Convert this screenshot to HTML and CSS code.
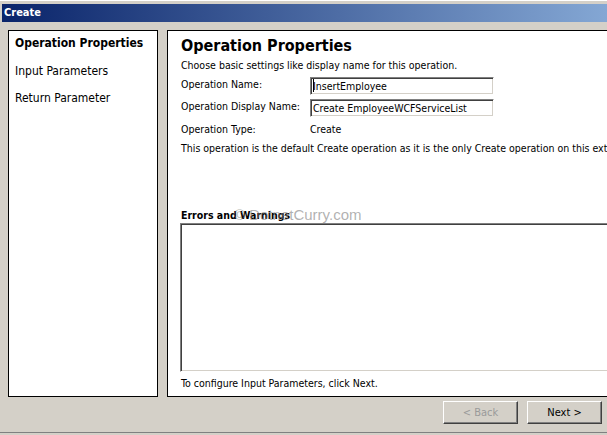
FILE: index.html
```html
<!DOCTYPE html>
<html lang="en">
<head>
  <meta charset="UTF-8">
  <title>Create</title>
  <link rel="stylesheet" href="styles.css">
</head>
<body>
  <div class="window">
    <div class="titlebar">Create</div>

    <div class="main">
      <!-- Wizard steps -->
      <nav class="steps">
        <div class="step active">Operation Properties</div>
        <div class="step">Input Parameters</div>
        <div class="step">Return Parameter</div>
      </nav>

      <!-- Current page -->
      <section class="page">
        <h1>Operation Properties</h1>
        <p class="intro">Choose basic settings like display name for this operation.</p>

        <div class="form">
          <label>Operation Name:</label>
          <div class="field"><span class="caret"></span>InsertEmployee</div>
          <label>Operation Display Name:</label>
          <div class="field">Create EmployeeWCFServiceList</div>
          <label class="type-label">Operation Type:</label>
          <div class="type-value">Create</div>
        </div>

        <p class="note">This operation is the default Create operation as it is the only Create operation on this external content type.</p>

        <div class="errors">
          <h2>Errors and Warnings</h2>
          <span class="watermark">© DotnetCurry.com</span>
          <div class="error-box"></div>
        </div>

        <p class="hint">To configure Input Parameters, click Next.</p>
      </section>
    </div>

    <div class="footer">
      <button class="btn" disabled>&lt; Back</button>
      <button class="btn">Next &gt;</button>
    </div>
  </div>
</body>
</html>
```

FILE: styles.css
```css
body {
  margin: 0;
  padding: 0;
  width: 607px;
  height: 435px;
  overflow: hidden;
  background-color: #d4d0c8;
  font-family: "DejaVu Sans Condensed", "DejaVu Sans", sans-serif;
  font-size: 10.5px;
  color: #000;
}

.window {
  height: 433px;
  border-top: 1px solid #fff;
  box-sizing: border-box;
  padding-top: 3px;
  border-bottom: 1px solid #808080;
}

.titlebar {
  height: 18px;
  margin-left: 2px;
  padding-left: 2px;
  line-height: 18px;
  font-weight: bold;
  font-size: 11px;
  color: #fff;
  background: linear-gradient(to right, #0a246a, #84a7d4);
}

.main {
  display: flex;
  gap: 9px;
  padding: 8px 0 0 8px;
}

/* Left list of wizard steps */
.steps {
  flex: 0 0 auto;
  width: 148px;
  height: 362px;
  background-color: #fff;
  border: 1px solid #000;
  padding-top: 3px;
}

.step {
  font-size: 12px;
  height: 27.5px;
  line-height: 18px;
  padding-left: 6px;
}

.step.active {
  font-weight: bold;
}

/* Right content page */
.page {
  flex: 0 0 auto;
  position: relative;
  width: 460px;
  height: 365px;
  background-color: #fff;
  border: 1px solid #000;
  padding-left: 13px;
  overflow: hidden;
  white-space: nowrap;
}

h1 {
  margin: 4px 0 0 0;
  font-size: 16px;
  line-height: 22px;
  font-weight: bold;
}

.intro {
  margin: 1px 0 0 0;
  line-height: 14px;
}

.form {
  display: grid;
  grid-template-columns: 129px 184px;
  grid-template-rows: 22px 22px 16px;
  align-items: start;
  margin-top: 4px;
}

.form label {
  padding-top: 1px;
  line-height: 14px;
}

.field {
  height: 18px;
  margin-top: 1px;
  line-height: 16px;
  box-sizing: border-box;
  padding-left: 2px;
  border: 1px solid;
  border-color: #808080 #fff #fff #808080;
  box-shadow: inset 1px 1px #404040, inset -1px -1px #d4d0c8;
}

.caret {
  display: inline-block;
  width: 1px;
  height: 13px;
  margin-right: -1px;
  vertical-align: -2px;
  background-color: #000;
}

.form .type-label,
.type-value {
  padding-top: 2px;
  line-height: 14px;
}

.note {
  margin: 5px 0 0 0;
  line-height: 14px;
}

.errors {
  position: relative;
  margin-top: 53px;
}

h2 {
  margin: 0;
  font-size: 10.5px;
  line-height: 14px;
  font-weight: bold;
}

.watermark {
  position: absolute;
  left: 53px;
  top: -2px;
  font-family: "Liberation Sans", Arial, sans-serif;
  font-size: 15px;
  line-height: 18px;
  color: rgba(125, 125, 125, 0.6);
}

.error-box {
  height: 149px;
  margin-top: 1px;
  margin-left: -1px;
  box-sizing: border-box;
  border: 1px solid;
  border-color: #808080 #fff #fff #808080;
  box-shadow: inset 1px 1px #404040, inset -1px -1px #d4d0c8;
}

.hint {
  margin: 4px 0 0 0;
  line-height: 14px;
}

/* Bottom buttons */
.footer {
  display: flex;
  justify-content: flex-end;
  gap: 9px;
  padding: 4px 5px 0 0;
}

.btn {
  width: 75px;
  height: 23px;
  font-family: inherit;
  font-size: 11px;
  color: #000;
  background-color: #d4d0c8;
  border: 1px solid;
  border-color: #fff #404040 #404040 #fff;
  box-shadow: inset -1px -1px #808080;
  padding: 0;
}

.btn:disabled {
  color: #9a9a9a;
}
```
